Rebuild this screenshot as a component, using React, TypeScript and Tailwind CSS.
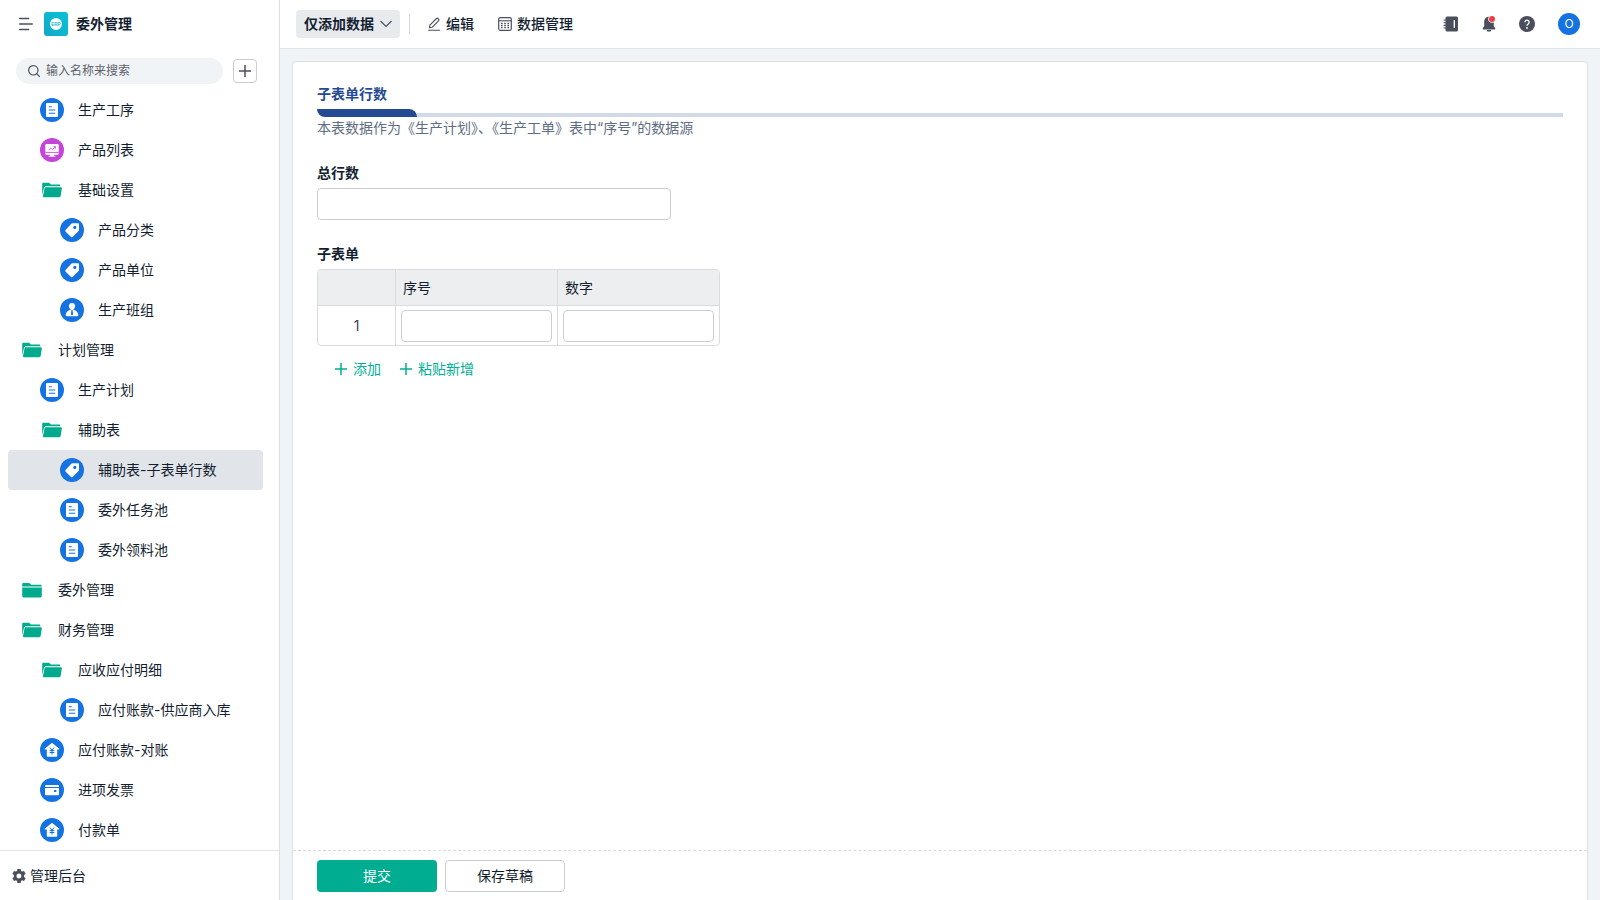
import React, { useState } from 'react';
import clsx from 'clsx';

type IconName = 'doc' | 'screen' | 'open' | 'closed' | 'tag' | 'user' | 'house' | 'wallet';

type MenuItem = {
  label: string;
  icon: IconName;
  depth: number;
};

const MENU: MenuItem[] = [
  { label: '生产工序', icon: 'doc', depth: 1 },
  { label: '产品列表', icon: 'screen', depth: 1 },
  { label: '基础设置', icon: 'open', depth: 1 },
  { label: '产品分类', icon: 'tag', depth: 2 },
  { label: '产品单位', icon: 'tag', depth: 2 },
  { label: '生产班组', icon: 'user', depth: 2 },
  { label: '计划管理', icon: 'open', depth: 0 },
  { label: '生产计划', icon: 'doc', depth: 1 },
  { label: '辅助表', icon: 'open', depth: 1 },
  { label: '辅助表-子表单行数', icon: 'tag', depth: 2 },
  { label: '委外任务池', icon: 'doc', depth: 2 },
  { label: '委外领料池', icon: 'doc', depth: 2 },
  { label: '委外管理', icon: 'closed', depth: 0 },
  { label: '财务管理', icon: 'open', depth: 0 },
  { label: '应收应付明细', icon: 'open', depth: 1 },
  { label: '应付账款-供应商入库', icon: 'doc', depth: 2 },
  { label: '应付账款-对账', icon: 'house', depth: 1 },
  { label: '进项发票', icon: 'wallet', depth: 1 },
  { label: '付款单', icon: 'house', depth: 1 },
];

const INDENT = ['pl-3', 'pl-8', 'pl-13'];

const BLUE = '#1472e1';

const GLYPHS: Record<IconName, React.ReactNode> = {
  doc: (
    <>
      <circle cx="12" cy="12" r="12" fill={BLUE} />
      <rect x="6" y="5" width="12" height="14" rx="1" fill="#fff" />
      <path d="M8.8 8.8h3M8.8 12h6.4M8.8 15.200h6.400" stroke={BLUE} strokeWidth="1.100" />
    </>
  ),
  screen: (
    <>
      <circle cx="12" cy="12" r="12" fill="#c545d8" />
      <path
        d="M6.300 6h11.400a1 1 0 0 1 1 1v8.800a1 1 0 0 1-1 1h-3.900v.9h1.600v1H8.600v-1h1.600v-.9H6.300a1 1 0 0 1-1-1V7a1 1 0 0 1 1-1z"
        fill="#fff"
      />
      <path
        d="M8.600 12l2.200-1.800 1.600 1.500 2.900-3M13.400 8.700h1.900v1.900M5.300 14.400h13.400"
        fill="none"
        stroke="#c545d8"
        strokeWidth=".9"
      />
    </>
  ),
  open: (
    <>
      <path
        d="M2.200 17V6c0-.7.500-1.200 1.200-1.200h5.200c.4 0 .7.1 1 .4l1.300 1.400h8.200c.7 0 1.200.5 1.200 1.200v.5H6c-1 0-1.700.6-2 1.500z"
        fill="#00ab8d"
      />
      <path
        d="M6 9.300h14.700c.7 0 1.200.6 1.100 1.300l-1.100 7.500c-.1.700-.7 1.200-1.400 1.200H4.200c-.8 0-1.300-.6-1.200-1.300l1.500-7.500c.2-.7.800-1.200 1.500-1.200z"
        fill="#00ab8d"
      />
    </>
  ),
  closed: (
    <>
      <path
        d="M2.200 8.600V6.200C2.200 5.500 2.700 5 3.400 5h5.400c.4 0 .7.1 1 .4l1.400 1.400h9.200c.8 0 1.400.5 1.400 1.200v.6z"
        fill="#00ab8d"
      />
      <path d="M2.200 9.500h19.600V18c0 .8-.6 1.400-1.400 1.400H3.600c-.8 0-1.400-.6-1.400-1.400z" fill="#00ab8d" />
    </>
  ),
  tag: (
    <>
      <circle cx="12" cy="12" r="12" fill={BLUE} />
      <path
        d="M12.300 5.200h5.600c.7 0 1.100.4 1.100 1.100V12c0 .4-.1.700-.4 1l-6 5.900c-.5.500-1.100.500-1.600 0l-5.500-5.400c-.5-.5-.5-1.100 0-1.600l5.800-6.200c.3-.3.600-.5 1-.5z"
        fill="#fff"
      />
      <circle cx="14.800" cy="9.400" r="1.600" fill={BLUE} />
    </>
  ),
  user: (
    <>
      <circle cx="12" cy="12" r="12" fill={BLUE} />
      <path
        d="M12 5c1.900 0 3.100 1.300 3.100 3.100 0 1.300-.6 2.500-1.500 3.100v.7c2.800.5 4.700 2.300 4.700 5.200 0 .8-.4 1.200-1.100 1.200H6.800c-.7 0-1.100-.4-1.100-1.200 0-2.900 1.900-4.700 4.700-5.200v-.7c-.9-.6-1.500-1.800-1.500-3.100C8.900 6.300 10.100 5 12 5z"
        fill="#fff"
      />
      <path d="M11.400 12h1.200l.5 4.400-1.100.9-1.100-.9z" fill={BLUE} />
    </>
  ),
  house: (
    <>
      <circle cx="12" cy="12" r="12" fill={BLUE} />
      <path
        d="M11.400 5.200a1 1 0 0 1 1.200 0l6.400 5.200c.5.4.3 1.200-.4 1.200h-1.400v6.200c0 .6-.4 1-1 1H7.800c-.6 0-1-.4-1-1v-6.200H5.400c-.7 0-.9-.8-.4-1.200z"
        fill="#fff"
      />
      <path
        d="M9.900 9.600l2.100 2.600 2.100-2.600M12 12.200v4.400M9.600 12.600h4.800M9.600 14.500h4.800"
        fill="none"
        stroke={BLUE}
      />
    </>
  ),
  wallet: (
    <>
      <circle cx="12" cy="12" r="12" fill={BLUE} />
      <path d="M6 6.900h12a1 1 0 0 1 1 1v1H5v-1a1 1 0 0 1 1-1z" fill="#fff" />
      <path d="M5 10h14v6.200a1 1 0 0 1-1 1H6a1 1 0 0 1-1-1z" fill="#fff" />
      <rect x="14" y="12" width="2.400" height="2" rx=".4" fill={BLUE} />
    </>
  ),
};

const MenuIcon = ({ name }: { name: IconName }) => (
  <svg viewBox="0 0 24 24" className="size-6 shrink-0">
    {GLYPHS[name]}
  </svg>
);

const Plus = () => (
  <svg viewBox="0 0 12 12" className="size-3 shrink-0">
    <path d="M6 0v12M0 6h12" stroke="currentColor" strokeWidth="1.500" />
  </svg>
);

const Sidebar = () => {
  const [active, setActive] = useState(9);
  return (
    <aside className="flex w-70 shrink-0 flex-col border-r border-[#dcdfe3] bg-white">
      <div className="flex h-12 shrink-0 items-center pl-[19px]">
        <button type="button" aria-label="收起菜单" className="text-[#4b4f5c]">
          <svg viewBox="0 0 14 14" className="size-3.5">
            <path
              d="M.7 1.500h9M.7 7h12.600M.7 12.500h9"
              stroke="currentColor"
              strokeWidth="1.400"
              strokeLinecap="round"
            />
          </svg>
        </button>
        <svg viewBox="0 0 24 24" className="ml-[11px] size-6">
          <defs>
            <linearGradient id="logo" x1="0" y1="1" x2="1" y2="0">
              <stop offset="0" stopColor="#12a8c8" />
              <stop offset="1" stopColor="#08c3d6" />
            </linearGradient>
          </defs>
          <rect width="24" height="24" rx="3" fill="url(#logo)" />
          <circle cx="12" cy="12" r="6" fill="#fff" />
          <text
            x="12"
            y="13.600"
            textAnchor="middle"
            fontSize="4.500"
            fontWeight="700"
            fontFamily="Liberation Sans"
            fill="#0fb4cd">
            ERP
          </text>
        </svg>
        <h1 className="ml-2 text-sm font-bold">委外管理</h1>
      </div>
      <div className="flex shrink-0 items-center gap-2.5 pb-1.5 pl-4 pt-2.5">
        <label className="flex h-[26px] w-[207px] shrink-0 items-center gap-1.5 rounded-full bg-[#f1f4f6] pl-3">
          <svg viewBox="0 0 12 12" className="size-3 shrink-0 text-[#4b4f5c]">
            <circle cx="5.300" cy="5.300" r="4.700" fill="none" stroke="currentColor" strokeWidth="1.200" />
            <path d="M8.700 8.700L11.600 11.600" stroke="currentColor" strokeWidth="1.200" strokeLinecap="round" />
          </svg>
          <input
            type="text"
            aria-label="搜索"
            placeholder="输入名称来搜索"
            className="w-40 bg-transparent text-xs outline-none placeholder:text-[#5e616b]"
          />
        </label>
        <button
          type="button"
          aria-label="新建"
          className="flex size-6 items-center justify-center rounded border border-[#c9cdd1] text-[#4b4f5c]">
          <Plus />
        </button>
      </div>
      <nav className="min-h-0 flex-1 overflow-y-auto pl-2 pr-4">
        {MENU.map((item, index) => (
          <a
            key={`menu-${index}`}
            href="#"
            onClick={() => setActive(index)}
            className={clsx(
              'flex h-10 items-center gap-3.5 rounded text-sm',
              INDENT[item.depth],
              index === active && 'bg-[#e1e4e8]'
            )}>
            <MenuIcon name={item.icon} />
            {item.label}
          </a>
        ))}
      </nav>
      <a
        href="#"
        className="flex h-[50px] shrink-0 items-center gap-1 border-t border-[#e1e4e8] pl-3 text-sm">
        <svg viewBox="0 0 14 14" className="size-3.5 text-[#4b4f5c]">
          <path
            fill="currentColor"
            fillRule="evenodd"
            d="M5.400 0h3.200l.4 2 1.100.6 1.900-.7 1.600 2.800-1.500 1.300v1.900l1.500 1.300-1.600 2.800-1.900-.7-1.100.7-.4 2H5.400l-.4-2-1.100-.7-1.900.7L.4 9.200l1.500-1.300V6L.4 4.700 2 1.900l1.900.7L5 2zM7 4.500a2.500 2.500 0 1 0 0 5 2.500 2.500 0 0 0 0-5z"
          />
        </svg>
        管理后台
      </a>
    </aside>
  );
};

const Header = () => (
  <header className="flex h-[49px] shrink-0 items-center border-b border-[#e4e7ea] bg-white pl-4 pr-5 text-sm">
    <div className="relative">
      <select
        aria-label="数据权限"
        className="h-7 w-26 appearance-none rounded bg-[#e8ebee] pl-2 font-bold outline-none">
        <option>仅添加数据</option>
      </select>
      <svg
        viewBox="0 0 12 8"
        className="pointer-events-none absolute right-2 top-2.5 h-2 w-3 text-[#4b4f5c]">
        <path d="M.5 1l5.500 5.500L11.500 1" fill="none" stroke="currentColor" strokeWidth="1.200" />
      </svg>
    </div>
    <span className="ml-[9px] h-5 w-px bg-[#d5d8dc]" />
    <button type="button" className="ml-[17px] flex items-center gap-[5px] font-medium">
      <svg viewBox="0 0 14 14" className="size-3.5 text-[#4b4f5c]">
        <path
          d="M2.400 10.800l.5-2.700L9.500 1.500a1 1 0 0 1 1.400 0l.8.8a1 1 0 0 1 0 1.400L5.100 10.300zM1.200 13.300h12"
          fill="none"
          stroke="currentColor"
          strokeWidth="1.100"
          strokeLinejoin="round"
        />
      </svg>
      编辑
    </button>
    <button type="button" className="ml-6 flex items-center gap-[5px] font-medium">
      <svg viewBox="0 0 14 14" className="size-3.5 text-[#4b4f5c]">
        <rect x=".7" y=".7" width="12.600" height="12.600" rx="1.500" fill="none" stroke="currentColor" strokeWidth="1.200" />
        <path d="M1 3.800h12" stroke="currentColor" strokeWidth="1.100" />
        <path
          d="M3 6.300h8M3 8.500h8M3 10.700h8"
          stroke="currentColor"
          strokeWidth="1.300"
          strokeDasharray="1.600 1.600"
        />
      </svg>
      数据管理
    </button>
    <div className="ml-auto flex items-center gap-[23px] text-[#4b4f5c]">
      <button type="button" aria-label="通讯录">
        <svg viewBox="0 0 16 16" className="size-4">
          <path
            d="M4 .5h9.500A1.500 1.500 0 0 1 15 2v12a1.500 1.500 0 0 1-1.500 1.500H4A1.500 1.500 0 0 1 2.500 14V2A1.500 1.500 0 0 1 4 .5z"
            fill="currentColor"
          />
          <path d="M.5 4h3M.5 6.700h3M.5 9.400h3M.5 12h3" stroke="currentColor" strokeWidth="1.100" />
          <path d="M11.300 4v8" stroke="#fff" strokeWidth="1.300" />
        </svg>
      </button>
      <button type="button" aria-label="通知">
        <svg viewBox="0 0 14 16" className="h-4 w-3.5 overflow-visible">
          <path
            d="M7 .8c3 0 4.800 2.200 4.800 5v4.500l1.400 2c.4.600.1 1.200-.6 1.200H1.400c-.7 0-1-.6-.6-1.200l1.400-2V5.800c0-2.800 1.800-5 4.800-5z"
            fill="currentColor"
          />
          <path d="M5 14h4v.4a1.200 1.200 0 0 1-1.200 1.200H6.200A1.200 1.200 0 0 1 5 14.400z" fill="currentColor" />
          <circle cx="10" cy="3" r="3.800" fill="#fff" />
          <circle cx="10" cy="3" r="3" fill="#f03e48" />
        </svg>
      </button>
      <button type="button" aria-label="帮助">
        <svg viewBox="0 0 16 16" className="size-4">
          <circle cx="8" cy="8" r="8" fill="currentColor" />
          <path
            d="M5.900 6.300a2.100 2.100 0 1 1 3.300 1.700C8.300 8.600 8 8.900 8 9.800"
            fill="none"
            stroke="#fff"
            strokeWidth="1.300"
          />
          <circle cx="8" cy="11.900" r=".9" fill="#fff" />
        </svg>
      </button>
      <button
        type="button"
        aria-label="账号"
        className="flex size-[22px] items-center justify-center rounded-full bg-[#1472e1] text-xs text-white">
        O
      </button>
    </div>
  </header>
);

const inputClass = 'h-8 rounded-sm border border-[#cbced1] bg-white px-2 outline-none';

const RowForm = () => (
  <form className="flex min-h-0 flex-1 flex-col" onSubmit={(e) => e.preventDefault()}>
    <div className="flex min-h-0 flex-1 flex-col gap-[23px] overflow-y-auto px-6 pt-[21px]">
      <section>
        <h2 className="font-bold text-[#254a94]">子表单行数</h2>
        <div className="mt-1 flex h-2 items-end">
          <span className="h-2 w-25 rounded-bl-lg rounded-tr-lg bg-[#254a94]" />
          <span className="h-1 flex-1 bg-[#d3dae7]" />
        </div>
        <p className="text-[#5e6d82]">本表数据作为《生产计划》、《生产工单》表中“序号”的数据源</p>
      </section>
      <div className="flex flex-col items-start gap-1">
        <label htmlFor="total" className="font-bold">
          总行数
        </label>
        <input id="total" type="text" className={clsx(inputClass, 'w-[354px]')} />
      </div>
      <div className="flex flex-col items-start gap-1">
        <h3 className="font-bold">子表单</h3>
        <div className="overflow-hidden rounded-sm border border-[#d9dcde]">
          <table className="table-fixed border-separate border-spacing-0">
            <thead>
              <tr className="h-9 bg-[#edeef0] text-left">
                <th className="w-[77px] border-b border-[#d9dcde]" />
                <th className="w-[162px] border-b border-l border-[#d9dcde] px-[7px] font-normal">序号</th>
                <th className="w-[162px] border-b border-l border-[#d9dcde] px-[7px] font-normal">数字</th>
              </tr>
            </thead>
            <tbody>
              <tr className="h-[39px]">
                <td className="text-center text-[#3c4150]">1</td>
                <td className="border-l border-[#d9dcde] px-[5px]">
                  <input type="text" aria-label="序号" className={clsx(inputClass, 'block w-full')} />
                </td>
                <td className="border-l border-[#d9dcde] px-[5px]">
                  <input type="text" aria-label="数字" className={clsx(inputClass, 'block w-full')} />
                </td>
              </tr>
            </tbody>
          </table>
        </div>
        <div className="mt-2 flex gap-[19px] pl-[18px] text-[#00b095]">
          <button type="button" className="flex items-center gap-1.5">
            <Plus />
            添加
          </button>
          <button type="button" className="flex items-center gap-1.5">
            <Plus />
            粘贴新增
          </button>
        </div>
      </div>
    </div>
    <div className="flex h-[50px] shrink-0 items-center gap-2 border-t border-dashed border-[#d9dcde] px-6">
      <button type="submit" className="h-8 w-30 rounded bg-[#00ad90] text-white">
        提交
      </button>
      <button type="button" className="h-8 w-30 rounded border border-[#cbced1] bg-white">
        保存草稿
      </button>
    </div>
  </form>
);

const App = () => (
  <div className="flex h-screen overflow-hidden bg-[#f1f4f6] font-['Inter','Noto_Sans_CJK_SC',sans-serif] text-[#141e31]">
    <Sidebar />
    <div className="flex min-w-0 flex-1 flex-col">
      <Header />
      <main className="flex min-h-0 flex-1 px-3 pt-3">
        <div className="flex min-w-0 flex-1 flex-col rounded-t border border-b-0 border-[#dcdfe3] bg-white text-sm leading-[22px]">
          <RowForm />
        </div>
      </main>
    </div>
  </div>
);

export default App;
